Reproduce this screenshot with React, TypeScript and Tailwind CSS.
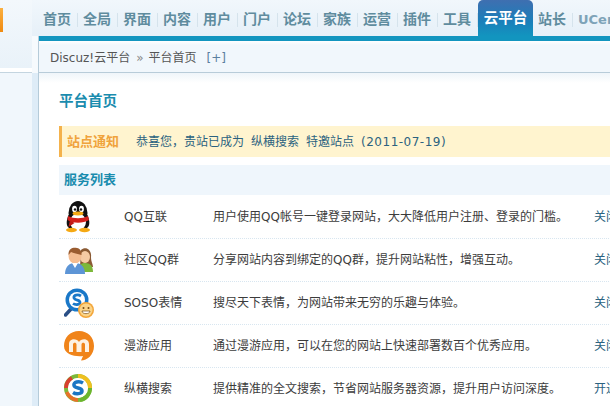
const navItems = ["首页", "全局", "界面", "内容", "用户", "门户", "论坛", "家族", "运营", "插件", "工具"];

function QQIcon() {
	return (
		<svg width="28" height="32" viewBox="0 0 28 32">
			<ellipse cx="14" cy="12" rx="9.500" ry="12" fill="#111" />
			<path d="M4.500 14 C2 20 2 25 5 27 L23 27 C26 25 26 20 23.500 14 Z" fill="#111" />
			<ellipse cx="14" cy="21" rx="8" ry="8.500" fill="#fff" />
			<ellipse cx="10.500" cy="8" rx="2.400" ry="3.200" fill="#fff" />
			<ellipse cx="17.500" cy="8" rx="2.400" ry="3.200" fill="#fff" />
			<circle cx="11" cy="8.500" r="1.200" fill="#111" />
			<circle cx="17" cy="8.500" r="1.200" fill="#111" />
			<ellipse cx="14" cy="12.500" rx="5.500" ry="1.900" fill="#f5a914" />
			<path d="M4 15 C10 18 18 18 24 15 L25 19 C19 22.500 9 22.500 3.500 19 Z" fill="#d4201c" />
			<path d="M6 19 L4.500 26 L10.500 22 Z" fill="#c01a18" />
			<ellipse cx="7.500" cy="29" rx="5.500" ry="2.200" fill="#f5a914" />
			<ellipse cx="20.500" cy="29" rx="5.500" ry="2.200" fill="#f5a914" />
		</svg>
	);
}

function GroupIcon() {
	return (
		<svg width="30" height="30" viewBox="0 0 30 30">
			<path d="M17 5 C21 1 28 4 27 12 C27 17 29 19 29 22 L16 22 Z" fill="#8a5a34" />
			<ellipse cx="21" cy="12" rx="5" ry="6" fill="#f6cba4" />
			<path d="M14 27 C14 20 17 18 21 18 C26 18 29 21 29 27 Z" fill="#7cb83a" />
			<ellipse cx="11" cy="11" rx="6.500" ry="7.500" fill="#f4bd92" />
			<path d="M4.500 10 C4 3 10 2 13 3 C16 3.500 18 6 17.500 10 C14 9 9 8 7 7 Z" fill="#9a5c30" />
			<path d="M1 29 C1 21 6 18 11 18 C16 18 21 21 21 29 Z" fill="#5d95d6" />
			<path d="M8 18 L11 23 L14 18 Z" fill="#fff" />
		</svg>
	);
}

function SosoIcon() {
	return (
		<svg width="30" height="32" viewBox="0 0 30 32">
			<path d="M7 22 L1.500 28" stroke="#2a4f86" strokeWidth="3.500" strokeLinecap="round" />
			<circle cx="13" cy="13" r="11.500" fill="#1a78c8" />
			<circle cx="13" cy="13" r="8" fill="#fff" />
			<path d="M17 9 C14 7 9 8 10 11 C11 14 16 12.500 16 15.500 C16 18 11 18 9 16.500" fill="none" stroke="#1a78c8" strokeWidth="2.800" />
			<circle cx="22" cy="23" r="8" fill="#f3a63a" />
			<circle cx="22" cy="23" r="6.500" fill="#fbd488" />
			<circle cx="19.500" cy="21" r="1" fill="#7a4a10" />
			<circle cx="24.500" cy="21" r="1" fill="#7a4a10" />
			<path d="M18 24 H26 C26 27.500 18 27.500 18 24 Z" fill="#fff" stroke="#7a4a10" strokeWidth="0.700" />
		</svg>
	);
}

function ManyouIcon() {
	return (
		<svg width="30" height="30" viewBox="0 0 30 30">
			<path d="M15 0 C24 0 30 6.500 30 15 C30 24 23 29.500 17 29.500 L19 25 C12 26 0 24 0 15 C0 6.500 6 0 15 0 Z" fill="#f0841a" />
			<path d="M5 21 V13 C5 7 13 7 15 11 C17 7 25 7 25 13 V21 H21 V13.500 C21 11 17.500 11 17.500 13.500 V21 H12.500 V13.500 C12.500 11 9 11 9 13.500 V21 Z" fill="#fdf1e2" />
		</svg>
	);
}

function ZongHengIcon() {
	return (
		<svg width="28" height="30" viewBox="0 0 28 30">
			<circle cx="14" cy="14" r="12" fill="none" stroke="#7cb93a" strokeWidth="4" />
			<path d="M14 2 A12 12 0 0 1 26 14" fill="none" stroke="#f0c020" strokeWidth="4" />
			<path d="M26 14 A12 12 0 0 1 16 26" fill="none" stroke="#6bb52e" strokeWidth="4" />
			<path d="M3 18 A12 12 0 0 0 14 26" fill="none" stroke="#e8722a" strokeWidth="4" />
			<path d="M2 14 A12 12 0 0 1 8 4" fill="none" stroke="#d84030" strokeWidth="4" />
			<circle cx="14" cy="14" r="10" fill="#fff" />
			<path d="M19 9 C15 6.500 9 8 10 11.500 C11 15 18 13 18 17 C18 20 12 20.500 9 18.500" fill="none" stroke="#1b76c4" strokeWidth="3.500" />
		</svg>
	);
}

const services = [
	{ name: "QQ互联", desc: "用户使用QQ帐号一键登录网站，大大降低用户注册、登录的门槛。", status: "关闭", icon: <QQIcon /> },
	{ name: "社区QQ群", desc: "分享网站内容到绑定的QQ群，提升网站粘性，增强互动。", status: "关闭", icon: <GroupIcon /> },
	{ name: "SOSO表情", desc: "搜尽天下表情，为网站带来无穷的乐趣与体验。", status: "关闭", icon: <SosoIcon /> },
	{ name: "漫游应用", desc: "通过漫游应用，可以在您的网站上快速部署数百个优秀应用。", status: "关闭", icon: <ManyouIcon /> },
	{ name: "纵横搜索", desc: "提供精准的全文搜索，节省网站服务器资源，提升用户访问深度。", status: "开通", icon: <ZongHengIcon /> },
];

function TopNav() {
	return (
		<div className="flex h-[36px] items-center overflow-hidden bg-[linear-gradient(#f1f7fc,#e6f0f8)] pl-[11px]">
			{navItems.map((item) => (
				<div key={item} className="flex h-[36px] w-[40px] shrink-0 items-center pt-[3px]">
					<span className="w-[34px] text-[14px] font-bold text-[#5f8c9e]">{item}</span>
					<span className="h-[14px] w-px bg-[#d5e3ec]" />
				</div>
			))}
			<div className="ml-[-5px] flex h-[36px] w-[55px] shrink-0 items-center justify-center rounded-t-[5px] bg-[linear-gradient(#3f6fb0,#1a7fba_60%,#1295bf)] pt-[1px] text-[14.500px] font-bold text-white">
				云平台
			</div>
			<div className="flex h-[36px] w-[40px] shrink-0 items-center pl-[5px] pt-[3px]">
				<span className="w-[34px] text-[14px] font-bold text-[#5f8c9e]">站长</span>
				<span className="h-[14px] w-px bg-[#d5e3ec]" />
			</div>
			<span className="flex h-[36px] shrink-0 items-center pl-[5px] pt-[3px] text-[13px] font-bold text-[#7ea3b8]">UCenter</span>
		</div>
	);
}

function ServiceRow({ name, desc, status, icon }: (typeof services)[number]) {
	return (
		<div className="flex h-[43px] shrink-0 items-center border-b border-dotted border-[#d8e6f0] text-[12px] text-[#3c3c3c]">
			<div className="flex w-[65px] shrink-0 justify-start pl-[5px]">{icon}</div>
			<div className="w-[89px] shrink-0">{name}</div>
			<div className="w-[381px] shrink-0">{desc}</div>
			<div className="shrink-0 text-[#2b6280]">{status}</div>
		</div>
	);
}

export default function App() {
	return (
		<div
			className="flex h-[406px] w-[610px] overflow-hidden bg-white"
			style={{ fontFamily: '"DejaVu Sans", "Noto Sans CJK SC", sans-serif' }}
		>
			<div className="flex w-[32px] shrink-0 flex-col bg-[#f1f7fc]">
				<div className="h-[68px] bg-[linear-gradient(#f3f8fc,#e9f2f9)] pt-[8px]">
					<div className="h-[24px] w-[3px] bg-[linear-gradient(#fbb040,#f08a10)]" />
				</div>
				<div className="h-[5px] border-b border-[#c4d5e0] bg-white" />
			</div>
			<div className="w-[578px] shrink-0">
				<TopNav />
				<div className="flex h-full w-[578px]">
					<div className="w-[6px] shrink-0 bg-[linear-gradient(#f6fafd,#f6fafd_37px,#deecf7_37px)]" />
					<div className="min-w-0 flex-1 border-l border-[#b5cbd9]">
						<div className="h-[5px] bg-[#1295bf]" />
						<div className="flex h-[32px] items-center border-b border-[#b8ccd9] bg-[linear-gradient(#ffffff,#f1f7fc_4px)] pl-[11px] pt-[3px] text-[12px] text-[#555]">
							<span>Discuz!云平台</span>
							<span className="ml-[6px] text-[#888]">»</span>
							<span className="ml-[5px]">平台首页</span>
							<span className="ml-[10px] text-[#5a80a0]">[+]</span>
						</div>
						<div className="bg-[linear-gradient(#eff5fa,#ffffff_10px)] pl-[20px] pt-[18px]">
							<h1 className="text-[14.500px] font-bold leading-[20px] text-[#1a8cae]">平台首页</h1>
							<div className="mt-[15px] flex h-[31px] w-[600px] items-center border-l-[3px] border-[#f4b24c] bg-[#fff4cf] pl-[5px] text-[12px]">
								<span className="w-[69px] shrink-0 text-[13px] font-bold text-[#f0a33c]">站点通知</span>
								<span className="text-[#2b6280]">恭喜您，贵站已成为</span>
								<span className="ml-[7px] text-[#2b6280]">纵横搜索</span>
								<span className="ml-[7px] text-[#2b6280]">特邀站点</span>
								<span className="ml-[7px] tracking-[0.5px] text-[#2b6280]">(2011-07-19)</span>
							</div>
							<div className="mt-[8px] flex h-[30px] w-[600px] items-center bg-[#eff6fc] pl-[5px] text-[13px] font-bold text-[#1a8cae]">
								服务列表
							</div>
							<div className="mt-[1px] flex w-[600px] flex-col">
								{services.map((s) => (
									<ServiceRow key={s.name} {...s} />
								))}
							</div>
						</div>
					</div>
				</div>
			</div>
		</div>
	);
}
